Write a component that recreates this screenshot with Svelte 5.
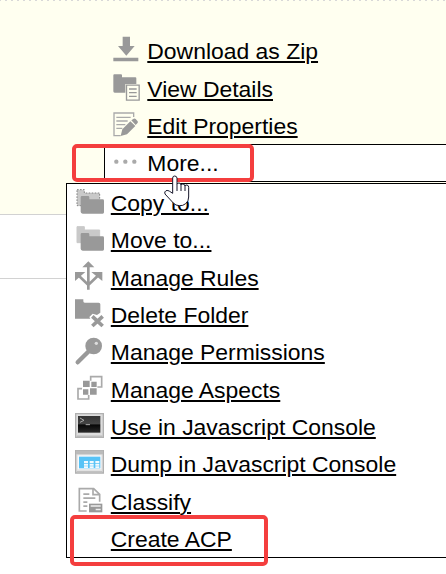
<script>
  const actions = [
    { label: 'Download as Zip', icon: 'download' },
    { label: 'View Details', icon: 'details' },
    { label: 'Edit Properties', icon: 'edit' }
  ];
  const menu = [
    { label: 'Copy to...', icon: 'copy' },
    { label: 'Move to...', icon: 'move' },
    { label: 'Manage Rules', icon: 'rules' },
    { label: 'Delete Folder', icon: 'delete' },
    { label: 'Manage Permissions', icon: 'key' },
    { label: 'Manage Aspects', icon: 'aspects' },
    { label: 'Use in Javascript Console', icon: 'console' },
    { label: 'Dump in Javascript Console', icon: 'table' },
    { label: 'Classify', icon: 'classify' },
    { label: 'Create ACP', icon: '' }
  ];
</script>

{#snippet icon(name)}
  <svg class="icon" viewBox="0 0 90 90" fill="#999">
    {#if name === 'download'}
      <path d="M32 2h22v28h14L43 59 18 30h14zM4 65h75v11H4z" />
    {:else if name === 'details'}
      <path d="M4 7q0-3 3-3h20q3 0 3 3v6h40q3 0 3 3v17H40v26H8q-4 0-4-4z" />
      <path d="M43.500 36.500h38v45h-38z" fill="#fffff0" stroke="#999" stroke-width="4" />
      <path d="M51 46h23v4H51zM51 57h23v4H51zM51 68h23v4H51z" />
    {:else if name === 'edit'}
      <path d="M65 18V6H6v68h20" fill="none" stroke="#aaa" stroke-width="4" />
      <path d="M13 17h43v4H13zM13 28h34v4H13zM13 39h27v4H13zM13 50h18v4H13z" fill="#aaa" />
      <path d="M26 75l5-20 24-24 15 14-25 25zM58 28l7-5q3-2 6 1l6 7q2 3-1 6l-5 5z" />
    {:else if name === 'more'}
      <g fill="#aaa"><circle cx="13" cy="41" r="6.500" /><circle cx="40" cy="41" r="6.500" /><circle cx="67" cy="41" r="6.500" /></g>
    {:else if name === 'copy' || name === 'move'}
      <path
        d="M9 5h22v10h46v38H9z"
        fill="#c9c9c9"
        stroke={name === 'copy' ? '#858585' : '#c9c9c9'}
        stroke-width="3"
        stroke-dasharray={name === 'copy' ? '5 4' : 'none'}
      />
      <path d="M20 28q0-4 4-4h18q4 0 4 4v6h40q4 0 4 4v35q0 4-4 4H26q-6-1-6-6z" />
    {:else if name === 'rules'}
      <path d="M43-2l18 18H25zM3 30h31L3 57zM52 30h33v27z" />
      <path d="M43 10v73M16 43l27 26 27-26" fill="none" stroke="#999" stroke-width="8" />
    {:else if name === 'delete'}
      <path d="M3-2h25v6q0 4 4 4h42q5 0 5 5v25l-10 7-13-4-10 10 3 5H3z" />
      <path d="M55 49l31 29M86 49L55 78" fill="none" stroke="#999" stroke-width="11" />
    {:else if name === 'key'}
      <path d="M11 76l34-34" fill="none" stroke="#999" stroke-width="13" stroke-linecap="round" />
      <circle cx="59" cy="27" r="25" />
      <circle cx="67" cy="19" r="5" fill="#ddd" />
    {:else if name === 'aspects'}
      <path d="M50 20V8h33v31H70M24 44H12v31h32V63" fill="none" stroke="#aaa" stroke-width="5" />
      <path d="M27 20h20v19H27zM52 23h16v16H52zM27 46h16v16H27zM48 43h20v19H48z" />
    {:else if name === 'console'}
      <defs>
        <linearGradient id="screen" x2="0" y2="1">
          <stop stop-color="#333" /><stop offset=".45" stop-color="#444" />
          <stop offset=".55" stop-color="#080808" /><stop offset="1" stop-color="#292929" />
        </linearGradient>
      </defs>
      <path d="M5 5h83v71H5z" fill="#ddd" stroke="#b0b0b0" stroke-width="4" />
      <path d="M8 73h77" stroke="#bbb" stroke-width="5" />
      <path d="M12 12h67v50H12z" fill="url(#screen)" />
      <path d="M18 18l12 7-12 6M35 38h13" fill="none" stroke="#aaa" stroke-width="3" />
    {:else if name === 'table'}
      <path d="M5 5h83v67H5z" fill="#e2e2e2" stroke="#b0b0b0" stroke-width="4" />
      <path d="M6 5h81v11H6z" fill="#bbb" />
      <path d="M11 19h71v42H11z" fill="#f8fafc" />
      <path d="M15 23h64v35H15z" fill="#58c3f6" />
      <path d="M30 36h12v6H30zM47 36h12v6H47zM64 36h12v6H64zM30 44h12v6H30zM47 44h12v6H47zM64 44h12v6H64zM30 52h12v5H30zM47 52h12v5H47zM64 52h12v5H64z" fill="#f2fafe" />
      <path d="M8 68h77" stroke="#c2c2c2" stroke-width="4" />
    {:else if name === 'classify'}
      <path d="M38 75H16V8h43l18 17v22M57 8v18h20" fill="none" stroke="#aaa" stroke-width="5" />
      <path d="M28 22h18v5H28zM28 34h36v5H28zM28 46h12v5H28zM28 58h12v5H28z" fill="#aaa" />
      <path d="M45 53h40v26H45z" fill="#999" />
      <path d="M50 58h30v4H50zM65 68h15v5H65z" fill="#eee" />
    {/if}
  </svg>
{/snippet}

<div class="page">
  <section class="record">
    <div class="actions">
      {#each actions as a}
        <div class="row">{@render icon(a.icon)}<a href="#top">{a.label}</a></div>
      {/each}
    </div>
    <div class="more">
      <div class="row">{@render icon('more')}<span>More...</span></div>
    </div>
  </section>
  <section class="next"></section>

  <div class="menu">
    {#each menu as m}
      <div class="row">{@render icon(m.icon)}<a href="#top">{m.label}</a></div>
    {/each}
  </div>

  <div class="mark first"></div>
  <div class="mark last"></div>
  <svg class="cursor" viewBox="0 0 78 96">
    <path
      d="M26 55V9q0-6 6-6t7 6v19q0-4 6-4t6 6q1-4 6-3 5 0 6 6 1-4 6-3 5 1 5 7v29q0 13-9 20-8 7-19 6-11 0-18-8L3 57q-3-7 3-10 6-2 11 2z"
      fill="#fff"
      stroke="#17172b"
      stroke-width="3"
      stroke-linejoin="round"
    />
    <path d="M39 28v20M51 29v19M63 32v16" stroke="#17172b" stroke-width="3" />
  </svg>
</div>

<style>
  .page {
    position: relative;
    width: 446px;
    height: 574px;
    overflow: hidden;
    background: #fff;
    color: #000;
    font: 22.930px 'Liberation Sans', Arial, sans-serif;
  }
  .record {
    box-sizing: border-box;
    height: 215px;
    padding-top: 32.400px;
    border-bottom: 1px solid #d2d2d2;
    background:
      repeating-linear-gradient(90deg, #d8d8d8 0 2px, #fffff0 2px 6px) -1px 0 / 450px 1px no-repeat,
      #fffff0;
  }
  .next {
    height: 63px;
    border-bottom: 1px solid #d2d2d2;
  }
  .actions {
    height: 111.600px;
    padding-left: 112px;
  }
  .more {
    box-sizing: border-box;
    height: 38px;
    margin-left: 104px;
    padding-left: 7px;
    border: solid #000;
    border-width: 1px 0 1px 1px;
    background: #fff;
  }
  .more .row {
    margin-top: -0.500px;
  }
  .row {
    display: flex;
    align-items: center;
    height: 37.333px;
    line-height: 37.333px;
    white-space: nowrap;
  }
  .icon {
    width: 30px;
    height: 30px;
    margin-right: 5.300px;
    overflow: visible;
    flex: none;
  }
  a,
  span {
    margin-top: 1.800px;
  }
  a {
    color: #000;
    text-decoration: underline;
    text-decoration-thickness: 2px;
    text-underline-offset: 2px;
  }
  .menu {
    position: absolute;
    box-sizing: border-box;
    left: 66px;
    top: 183px;
    width: 400px;
    height: 375px;
    padding-left: 7px;
    border: 1px solid #000;
    background: #fff;
  }
  .menu .icon {
    margin-right: 6.800px;
  }
  .mark {
    position: absolute;
    box-sizing: border-box;
    border: 4px solid #f43e3e;
    border-radius: 5px;
  }
  .first {
    left: 72px;
    top: 144px;
    width: 182px;
    height: 38px;
  }
  .last {
    left: 70px;
    top: 515px;
    width: 198px;
    height: 51px;
  }
  .cursor {
    position: absolute;
    left: 164px;
    top: 175px;
    width: 26px;
    height: 32px;
  }
</style>
